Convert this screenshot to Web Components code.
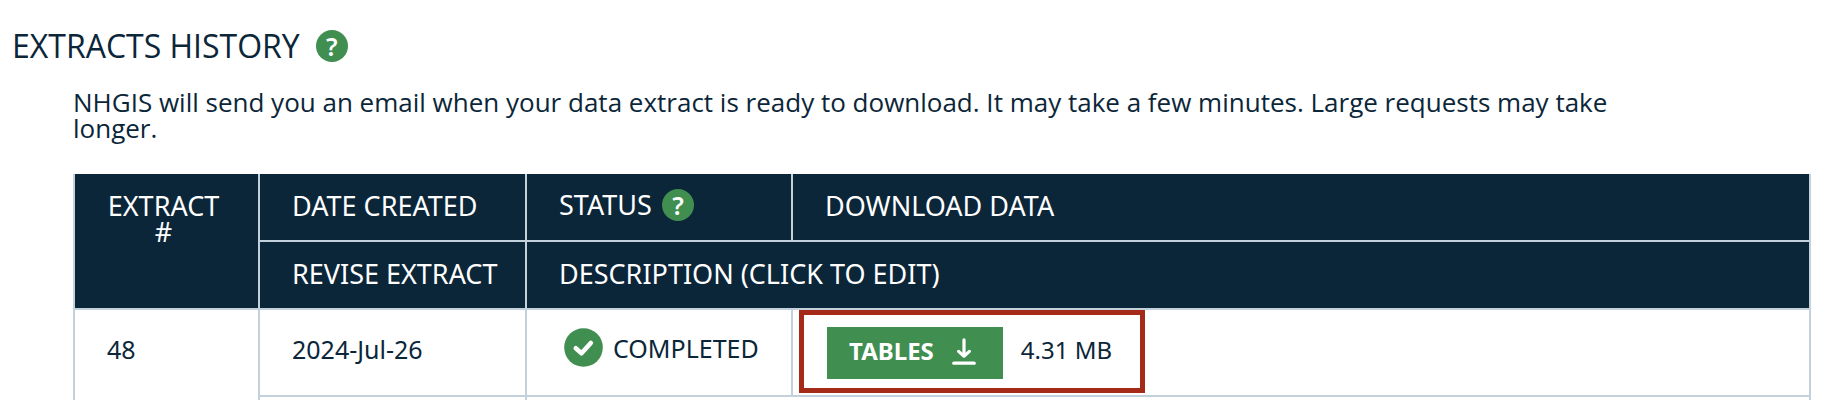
<!DOCTYPE html>
<html lang="en">
<head>
<meta charset="utf-8">
<title>Extracts History</title>
<style>
  body { margin: 0; background: #fff; color: #0b2639; font-family: "Noto Sans", "Open Sans", sans-serif; }
</style>
</head>
<body>
<extracts-page>
  <span slot="title">EXTRACTS HISTORY</span>
  <span slot="intro">NHGIS will send you an email when your data extract is ready to download. It may take a few minutes. Large requests may take longer.</span>
  <extracts-table></extracts-table>
</extracts-page>

<script>
function define(name, html) {
  const template = document.createElement('template');
  template.innerHTML = html;
  customElements.define(name, class extends HTMLElement {
    constructor() {
      super();
      this.attachShadow({ mode: 'open' }).append(template.content.cloneNode(true));
    }
  });
}

define('help-button', `
  <style>
    :host { display: block; flex: none; }
    button { display: block; width: 32px; height: 32px; padding: 0; border: 0; border-radius: 50%;
      background: #408e50; color: #fff; font: 600 25px/32px "Noto Sans", sans-serif; text-align: center; }
  </style>
  <button type="button" title="Help">?</button>`);

define('status-label', `
  <style>
    :host { display: flex; align-items: center; gap: 10px; padding-left: 5px; }
    svg { flex: none; width: 39px; height: 39px; }
  </style>
  <svg viewBox="0 0 39 39" aria-hidden="true">
    <circle cx="19.5" cy="19.5" r="19.3" fill="#408e50"/>
    <path d="M11.8 20.3l5.7 4.9 9.3-10.2" fill="none" stroke="#fff" stroke-width="4.6" stroke-linecap="round" stroke-linejoin="round"/>
  </svg>
  <slot></slot>`);

define('download-button', `
  <style>
    :host { display: block; }
    button { display: flex; align-items: center; gap: 18px; height: 52px; padding: 0 27px 4px 22px; border: 0;
      background: #408e50; color: #fff; font: 700 24px/26px "Noto Sans", sans-serif; }
    svg { flex: none; width: 24px; height: 27px; }
  </style>
  <button type="button">
    <slot></slot>
    <svg viewBox="0 0 24 27" aria-hidden="true" fill="none" stroke="#fff" stroke-linecap="round" stroke-linejoin="round">
      <path d="M12 1.8v16.4M6.6 13.4l5.4 4.8 5.4-4.8" stroke-width="3.2"/>
      <path d="M1.8 25.2h20.4" stroke-width="3.2"/>
    </svg>
  </button>`);

define('download-item', `
  <style>
    :host { display: flex; width: max-content; align-items: center; gap: 18px; font-size: 24px;
      padding: 12px 28px 9px 23px; border: 5px solid #a52a17; }
    .size { padding-bottom: 6px; }
  </style>
  <download-button><slot></slot></download-button>
  <span class="size"><slot name="size"></slot></span>`);

define('extracts-table', `
  <style>
    :host { display: block; }
    table { width: 100%; table-layout: fixed; border-collapse: separate; border-spacing: 0; border-left: 2px solid #c2d1dc; }
    th, td { border: solid #c2d1dc; border-width: 0 2px 2px 0; vertical-align: top; text-align: left; }
    th { padding: 19px 32px 21px; background: #0b2639; color: #fff; font-size: 27px; font-weight: 400; line-height: 26px; white-space: nowrap; }
    td { padding: 26px 32px; font-size: 25px; line-height: 26px; }
    .number { width: 185px; } .date { width: 267px; } .status { width: 266px; }
    th.id { padding-right: 38px; text-align: center; white-space: normal; }
    th.help { padding: 15px 32px 19px; }
    .with-help { display: flex; align-items: center; gap: 10px; }
    td.state { padding: 18px 32px; }
    td.download { padding: 0 6px 2px; }
    td.empty { height: 14px; }
  </style>
  <table>
    <colgroup><col class="number"><col class="date"><col class="status"><col></colgroup>
    <thead>
      <tr>
        <th class="id" rowspan="2" scope="col">EXTRACT #</th>
        <th scope="col">DATE CREATED</th>
        <th class="help" scope="col"><div class="with-help">STATUS <help-button></help-button></div></th>
        <th scope="col">DOWNLOAD DATA</th>
      </tr>
      <tr>
        <th scope="col">REVISE EXTRACT</th>
        <th scope="col" colspan="2">DESCRIPTION (CLICK TO EDIT)</th>
      </tr>
    </thead>
    <tbody>
      <tr>
        <td rowspan="2">48</td>
        <td>2024-Jul-26</td>
        <td class="state"><status-label>COMPLETED</status-label></td>
        <td class="download"><download-item>TABLES<span slot="size">4.31 MB</span></download-item></td>
      </tr>
      <tr>
        <td class="empty"></td>
        <td class="empty" colspan="2"></td>
      </tr>
    </tbody>
  </table>`);

define('extracts-page', `
  <style>
    :host { display: block; box-sizing: border-box; max-height: 100vh; overflow: hidden; padding: 30px 35px 0 12px; }
    header { display: flex; align-items: center; gap: 16px; }
    h1 { margin: 0; font: 400 32px/32px "Open Sans", sans-serif; }
    .body { margin-left: 61px; }
    p { margin: 27px 145px 33px 0; font: 400 26px/26px "Open Sans", sans-serif; }
  </style>
  <header><h1><slot name="title"></slot></h1><help-button></help-button></header>
  <div class="body">
    <p><slot name="intro"></slot></p>
    <slot></slot>
  </div>`);
</script>
</body>
</html>
